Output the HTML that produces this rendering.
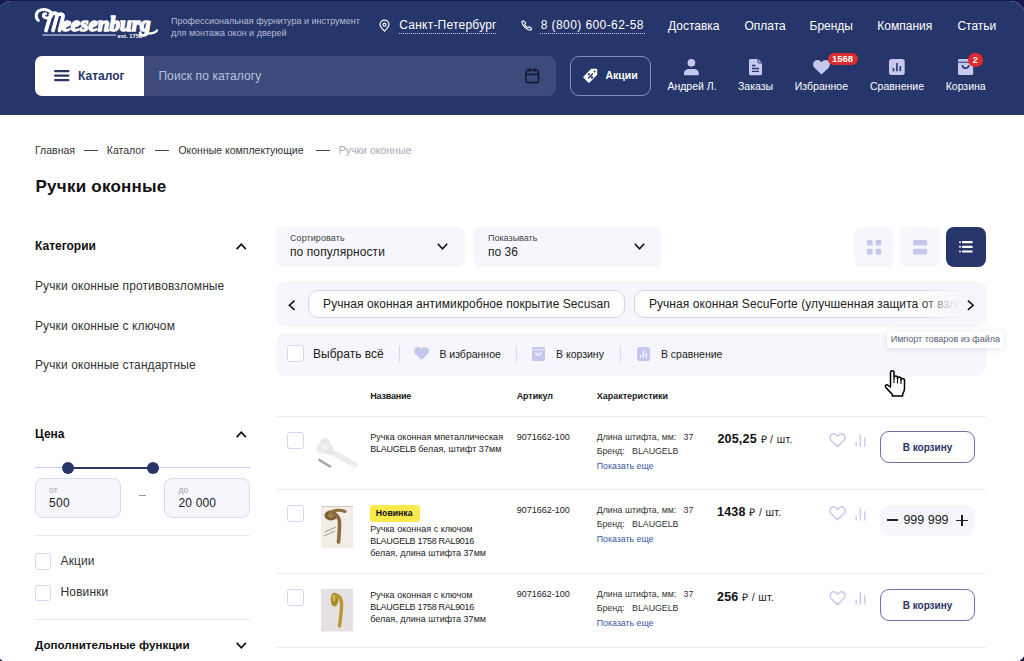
<!DOCTYPE html>
<html><head><meta charset="utf-8">
<style>
*{box-sizing:border-box;margin:0;padding:0}
html,body{width:1024px;height:661px;overflow:hidden;background:#14184a;font-family:"Liberation Sans",sans-serif}
#page{position:absolute;left:-4px;top:0.6px;width:1029.5px;height:662.6px;background:#fff;border-radius:16px 16px 14px 14px;overflow:hidden}
#inner{position:absolute;left:4px;top:-0.6px;width:1024px;height:661px}
.a{position:absolute;white-space:nowrap;line-height:1}
svg{position:absolute;overflow:visible}
#hdr{position:absolute;left:0;top:0;width:1024px;height:115px;background:#26356a}
.nav{font-size:12px;color:#fff;top:19.6px}
.lbl{font-size:10.5px;color:#fff;top:81px}
.badge{position:absolute;background:#dc2c2c;color:#fff;font-weight:bold;font-size:9.5px;text-align:center;line-height:13px}
.bc{font-size:10.5px;color:#333;top:145px}
.dash{position:absolute;top:150px;width:14px;height:1px;background:#444}
.st{font-size:12px;font-weight:bold;color:#111}
.si{font-size:12px;color:#333;letter-spacing:.1px}
.box{position:absolute;background:#f6f6fc;border-radius:8px}
.cb{position:absolute;width:17px;height:17px;border:1px solid #d6d6f0;border-radius:3px;background:#fff}
.hr{position:absolute;left:276px;width:710px;height:1px;background:#ececf7}
.t9{font-size:9px;color:#222;line-height:12px}
.ch{font-size:8.8px;color:#333;line-height:14.5px}
.lnk{color:#3b55a5}
.price{font-size:12.5px;font-weight:bold;color:#111;letter-spacing:.2px}
.price span{font-weight:normal;font-size:10.5px;letter-spacing:.35px;color:#222}
.btn{position:absolute;left:880px;width:95px;height:31.5px;border:1px solid #6a73a3;border-radius:9px;font-size:10px;font-weight:bold;color:#283567;text-align:center;line-height:31.5px}
.th{font-size:9px;font-weight:bold;color:#222;top:392px}
</style></head><body>
<div id="page"><div id="inner">
<div id="hdr">
  <!-- logo -->
  <svg style="left:0;top:0" width="170" height="42" viewBox="0 0 170 42">
    <path d="M38.3 20.5C35 17.5 35.5 11 41 9.9 46 8.9 51.2 10.5 52 14.2 51.5 18.2 47 18.8 44.5 17.2 42.5 15.8 43.3 13.5 45.6 13.8" fill="none" stroke="#fff" stroke-width="3" stroke-linecap="round"/>
    <path d="M51 14L46 30.5M50.5 14.5c3.5-2.5 7-1.5 6.5 1.5L53 30.5M56.5 15.5c3.5-2.5 7-1.5 6.5 1.5L59.5 30.5" fill="none" stroke="#fff" stroke-width="3.8" stroke-linecap="round" stroke-linejoin="round"/>
    <text x="61.5" y="31.3" font-family="Liberation Serif" font-style="italic" font-weight="bold" font-size="22" fill="#fff" stroke="#fff" stroke-width="1.6" stroke-linejoin="round" textLength="89" lengthAdjust="spacingAndGlyphs">eesenburg</text>
    <path d="M147 33.5c4.5 0 9-1 10-3" fill="none" stroke="#fff" stroke-width="2.4" stroke-linecap="round"/>
    <rect x="42.5" y="34.3" width="73.5" height="1.5" fill="#a9afcc"/>
    <text x="117.6" y="38" font-family="Liberation Sans" font-weight="bold" font-size="5.3" fill="#fff" textLength="24.5" lengthAdjust="spacingAndGlyphs">est. 1758</text>
  </svg>
  <div class="a" style="left:171px;top:15px;font-size:9px;line-height:12px;color:#b9bed8">Профессиональная фурнитура и инструмент<br>для монтажа окон и дверей</div>
  <!-- location -->
  <svg style="left:379px;top:20px" width="11" height="12" viewBox="0 0 11 12"><path d="M5.5 11.2C3.2 8.9 1 6.6 1 4.6a4.5 4.5 0 0 1 9 0c0 2-2.2 4.3-4.5 6.6z" fill="none" stroke="#fff" stroke-width="1.2" stroke-linejoin="round"/><circle cx="5.5" cy="4.7" r="1.5" fill="none" stroke="#fff" stroke-width="1.2"/></svg>
  <div class="a nav" style="left:399.3px;letter-spacing:.22px;top:18.5px">Санкт-Петербург</div>
  <div class="a" style="left:399px;top:32.5px;width:98px;height:1px;background-image:linear-gradient(90deg,#c8cce0 50%,transparent 50%);background-size:2px 1px"></div>
  <!-- phone -->
  <svg style="left:520.5px;top:20px" width="12" height="11" viewBox="0 0 12 11"><path d="M2.8.8l1.9 2.3-1 1.3c.7 1.5 1.9 2.6 3.4 3.3l1.2-1 2.3 1.8-.8 1.8C5.6 9.9 1.2 5.6.8 1.6z" fill="none" stroke="#fff" stroke-width="1.1" stroke-linejoin="round"/></svg>
  <div class="a nav" style="left:540.7px;letter-spacing:.42px;top:18.5px">8 (800) 600-62-58</div>
  <div class="a" style="left:540px;top:32.5px;width:105px;height:1px;background-image:linear-gradient(90deg,#c8cce0 50%,transparent 50%);background-size:2px 1px"></div>
  <div class="a nav" style="left:668px">Доставка</div>
  <div class="a nav" style="left:744.4px">Оплата</div>
  <div class="a nav" style="left:809.5px">Бренды</div>
  <div class="a nav" style="left:877.3px">Компания</div>
  <div class="a nav" style="left:957.4px">Статьи</div>

  <!-- catalog -->
  <div class="a" style="left:35px;top:56px;width:109px;height:40px;background:#fff;border-radius:7px 0 0 7px"></div>
  <svg style="left:54px;top:70px" width="16" height="12" viewBox="0 0 16 12"><rect x="0" y="0" width="15.5" height="2.2" rx="1.1" fill="#283567"/><rect x="0" y="4.5" width="15.5" height="2.2" rx="1.1" fill="#283567"/><rect x="0" y="9" width="15.5" height="2.2" rx="1.1" fill="#283567"/></svg>
  <div class="a" style="left:78.1px;top:70px;font-size:12px;font-weight:bold;color:#283567">Каталог</div>
  <div class="a" style="left:144px;top:56px;width:411.7px;height:40px;background:#3e4a7b;border-radius:0 8px 8px 0"></div>
  <div class="a" style="left:158.4px;top:69.6px;font-size:12px;color:#bcc1e0;letter-spacing:.1px">Поиск по каталогу</div>
  <svg style="left:525.4px;top:68px" width="14.4" height="15.5" viewBox="0 0 14.4 15.5"><rect x="0.85" y="2.2" width="12.7" height="12.45" rx="2.2" fill="none" stroke="#171a35" stroke-width="1.7"/><path d="M1 6.3h12.4M4.6 0.3v3.5M9.8 0.3v3.5" stroke="#171a35" stroke-width="1.7"/></svg>
  <!-- promo -->
  <div class="a" style="left:570px;top:55.5px;width:81px;height:40.2px;border:1px solid #858db6;border-radius:9px"></div>
  <svg style="left:582.5px;top:68.3px" width="15" height="15" viewBox="0 0 15 15"><path d="M8.2 0.8h5.2a.8.8 0 0 1 .8.8v5.2L6.6 14.4a1 1 0 0 1-1.4 0L0.6 9.8a1 1 0 0 1 0-1.4z" fill="#fff"/><circle cx="11.6" cy="3.4" r="1" fill="#283567"/><path d="M5.2 10.2L9.8 5.6" stroke="#26356a" stroke-width="1.5"/><circle cx="5.9" cy="6.3" r="1.15" fill="#26356a"/><circle cx="9" cy="9.5" r="1.15" fill="#26356a"/></svg>
  <div class="a" style="left:605.5px;top:69.7px;font-size:10.5px;font-weight:bold;color:#fff">Акции</div>

  <!-- user icons -->
  <svg style="left:684.3px;top:58.8px" width="15" height="16.5" viewBox="0 0 15 16.5"><circle cx="7.4" cy="3.85" r="3.85" fill="#c6c7ec"/><path d="M0 14.5C0 11.5 2.5 10 5 10h4.8c2.7 0 5 1.5 5 4.5v1.8H0z" fill="#c6c7ec"/></svg>
  <div class="a lbl" style="left:667.4px">Андрей Л.</div>
  <svg style="left:749px;top:58.7px" width="13" height="16.3" viewBox="0 0 13 16.3"><path d="M1.5 0h7.5l4 4v10.8a1.5 1.5 0 0 1-1.5 1.5h-10A1.5 1.5 0 0 1 0 14.8V1.5A1.5 1.5 0 0 1 1.5 0z" fill="#c6c7ec"/><path d="M9 0v3a1 1 0 0 0 1 1h3" fill="none" stroke="#283567" stroke-width="1"/><path d="M3 6.5h3.5M3 9.5h7M3 12.3h7" stroke="#283567" stroke-width="1.3"/></svg>
  <div class="a lbl" style="left:738px">Заказы</div>
  <svg style="left:813px;top:59.7px" width="17" height="14.5" viewBox="0 0 17 14.5"><path d="M8.5 14.5L1.6 7.9C-.6 5.7-.4 2.2 2 .7 4.1-.6 6.8 0 8.5 2.2 10.2 0 12.9-.6 15 .7c2.4 1.5 2.6 5 .4 7.2z" fill="#c6c7ec"/></svg>
  <div class="badge" style="left:827.6px;top:52.9px;width:30px;height:12.5px;border-radius:6.5px;line-height:12.5px">1568</div>
  <div class="a lbl" style="left:794.8px">Избранное</div>
  <svg style="left:889px;top:59px" width="16" height="16" viewBox="0 0 16 16"><rect x="0" y="0" width="15.7" height="16" rx="2.5" fill="#c6c7ec"/><path d="M4.5 12.3V9M7.9 12.3V4M11.3 12.3V7" stroke="#283567" stroke-width="1.6"/></svg>
  <div class="a lbl" style="left:870px">Сравнение</div>
  <svg style="left:957.8px;top:59px" width="15.2" height="16" viewBox="0 0 15.2 16"><path d="M1.5 0h12.2a1.5 1.5 0 0 1 1.5 1.5v13a1.5 1.5 0 0 1-1.5 1.5H1.5A1.5 1.5 0 0 1 0 14.5v-13A1.5 1.5 0 0 1 1.5 0z" fill="#c6c7ec"/><path d="M0 3.2h15.2" stroke="#283567" stroke-width="1"/><path d="M4.4 6c0 4.2 6.4 4.2 6.4 0" fill="none" stroke="#26356a" stroke-width="1.6"/></svg>
  <div class="badge" style="left:968px;top:52.7px;width:14.7px;height:14.7px;border-radius:50%;line-height:14.7px;font-size:9px">2</div>
  <div class="a lbl" style="left:945.7px">Корзина</div>
</div>

<!-- breadcrumb -->
<div class="a bc" style="left:35px">Главная</div>
<div class="dash" style="left:83.7px"></div>
<div class="a bc" style="left:106.8px">Каталог</div>
<div class="dash" style="left:155px"></div>
<div class="a bc" style="left:178.4px">Оконные комплектующие</div>
<div class="dash" style="left:316px"></div>
<div class="a bc" style="left:338.8px;color:#a9a9b3">Ручки оконные</div>
<div class="a" style="left:35.5px;top:178.2px;font-size:17px;font-weight:bold;color:#111;letter-spacing:.24px">Ручки оконные</div>

<!-- sidebar -->
<div class="a st" style="left:35px;top:240px">Категории</div>
<svg style="left:235.8px;top:243px" width="10.6" height="7" viewBox="0 0 10.6 7"><path d="M0.7 6.2L5.3 1.2 9.9 6.2" fill="none" stroke="#111" stroke-width="1.7"/></svg>
<div class="a si" style="left:35px;top:280px">Ручки оконные противовзломные</div>
<div class="a si" style="left:35px;top:319.5px">Ручки оконные с ключом</div>
<div class="a si" style="left:35px;top:359px">Ручки оконные стандартные</div>

<div class="a st" style="left:35px;top:428.1px">Цена</div>
<svg style="left:235.8px;top:431.3px" width="10.6" height="7" viewBox="0 0 10.6 7"><path d="M0.7 6.2L5.3 1.2 9.9 6.2" fill="none" stroke="#111" stroke-width="1.7"/></svg>
<div class="a" style="left:35px;top:466.8px;width:215px;height:1.5px;background:#c9caee"></div>
<div class="a" style="left:68px;top:466.5px;width:86px;height:2px;background:#283567"></div>
<div class="a" style="left:62.4px;top:461.5px;width:12px;height:12px;border-radius:50%;background:#283567"></div>
<div class="a" style="left:147.4px;top:461.5px;width:12px;height:12px;border-radius:50%;background:#283567"></div>
<div class="box" style="left:35px;top:477.5px;width:85.8px;height:40px;border:1px solid #d9d9f4"></div>
<div class="box" style="left:164px;top:477.5px;width:85.8px;height:40px;border:1px solid #d9d9f4"></div>
<div class="a" style="left:49.1px;top:485.8px;font-size:8.5px;color:#a3a3b3">от</div>
<div class="a" style="left:49.1px;top:497px;font-size:12px;color:#222;letter-spacing:.3px">500</div>
<div class="a" style="left:139px;top:495.3px;width:7px;height:1px;background:#999"></div>
<div class="a" style="left:178.5px;top:485.8px;font-size:8.5px;color:#a3a3b3">до</div>
<div class="a" style="left:178.5px;top:497px;font-size:12px;color:#222;letter-spacing:.15px">20 000</div>
<div class="a" style="left:35px;top:535px;width:215px;height:1px;background:#e9e9f6"></div>
<div class="cb" style="left:34.8px;top:553px;width:16.7px;height:16.5px"></div>
<div class="a si" style="left:60.6px;top:555.1px">Акции</div>
<div class="cb" style="left:34.8px;top:584.8px;width:16.7px;height:16.5px"></div>
<div class="a si" style="left:60.6px;top:586.3px">Новинки</div>
<div class="a" style="left:35px;top:619px;width:215px;height:1px;background:#e9e9f6"></div>
<div class="a st" style="left:35px;top:638.9px;font-size:11.6px">Дополнительные функции</div>
<svg style="left:235.8px;top:641.5px" width="10.6" height="7" viewBox="0 0 10.6 7"><path d="M0.7 0.8L5.3 5.8 9.9 0.8" fill="none" stroke="#111" stroke-width="1.7"/></svg>

<!-- selects -->
<div class="box" style="left:275.5px;top:226.5px;width:189.2px;height:40.4px"></div>
<div class="a" style="left:290px;top:233.5px;font-size:9px;color:#444;letter-spacing:.08px">Сортировать</div>
<div class="a" style="left:290px;top:246px;font-size:12px;color:#222;letter-spacing:.09px">по популярности</div>
<svg style="left:436.5px;top:243.3px" width="11" height="7" viewBox="0 0 11 7"><path d="M0.8 0.8L5.5 5.8 10.2 0.8" fill="none" stroke="#111" stroke-width="1.6"/></svg>
<div class="box" style="left:473.2px;top:226.5px;width:189.1px;height:40.4px"></div>
<div class="a" style="left:488px;top:233.5px;font-size:9px;color:#444">Показывать</div>
<div class="a" style="left:488px;top:246px;font-size:12px;color:#222">по 36</div>
<svg style="left:634px;top:243.3px" width="11" height="7" viewBox="0 0 11 7"><path d="M0.8 0.8L5.5 5.8 10.2 0.8" fill="none" stroke="#111" stroke-width="1.6"/></svg>

<!-- view buttons -->
<div class="box" style="left:854px;top:226.6px;width:40px;height:40px"></div>
<svg style="left:867px;top:239.6px" width="14.2" height="14.4" viewBox="0 0 14.2 14.4"><rect x="0" y="0" width="5.6" height="5.6" rx="1.2" fill="#c6c7e9"/><rect x="8.6" y="0" width="5.6" height="5.6" rx="1.2" fill="#c6c7e9"/><rect x="0" y="8.8" width="5.6" height="5.6" rx="1.2" fill="#c6c7e9"/><rect x="8.6" y="8.8" width="5.6" height="5.6" rx="1.2" fill="#c6c7e9"/></svg>
<div class="box" style="left:899.8px;top:226.6px;width:40px;height:40px"></div>
<svg style="left:912.7px;top:239.6px" width="14.2" height="14.4" viewBox="0 0 14.2 14.4"><rect x="0" y="0" width="14.2" height="5.6" rx="1.2" fill="#c6c7e9"/><rect x="0" y="8.8" width="14.2" height="5.6" rx="1.2" fill="#c6c7e9"/></svg>
<div class="box" style="left:945.7px;top:226.6px;width:40px;height:40px;background:#26356a"></div>
<svg style="left:958.7px;top:240.7px" width="13.6" height="11.7" viewBox="0 0 13.6 11.7"><circle cx="1" cy="1.2" r="1" fill="#fff"/><circle cx="1" cy="5.85" r="1" fill="#fff"/><circle cx="1" cy="10.5" r="1" fill="#fff"/><rect x="3" y="0.1" width="10.6" height="2.2" rx=".5" fill="#fff"/><rect x="3" y="4.75" width="10.6" height="2.2" rx=".5" fill="#fff"/><rect x="3" y="9.4" width="10.6" height="2.2" rx=".5" fill="#fff"/></svg>

<!-- tag bar -->
<div class="box" style="left:275.5px;top:281.2px;width:711px;height:45.7px;border-radius:11px"></div>
<svg style="left:288px;top:299.5px" width="7.5" height="10.5" viewBox="0 0 7.5 10.5"><path d="M6.6 0.7L1.4 5.25l5.2 4.55" fill="none" stroke="#111" stroke-width="1.6"/></svg>
<div class="a" style="left:308px;top:290.2px;width:316.5px;height:28.2px;border:1px solid #d3d3f3;border-radius:10px;background:#fff"></div>
<div class="a" style="left:323.1px;top:298px;font-size:12px;color:#222;letter-spacing:.07px">Ручная оконная антимикробное покрытие Secusan</div>
<div class="a" style="left:634.2px;top:290.2px;width:330px;height:28.2px;border:1px solid #d3d3f3;border-radius:10px;background:#fff"></div>
<div class="a" style="left:648.9px;top:298px;font-size:12px;color:#222;letter-spacing:.07px">Ручная оконная SecuForte (улучшенная защита от взлома)</div>
<div class="a" style="left:920px;top:285px;width:66px;height:38px;background:linear-gradient(90deg,rgba(246,246,252,0) 0%,rgba(246,246,252,.85) 45%,#f6f6fc 62%)"></div>
<svg style="left:966.8px;top:299.5px" width="7.5" height="10.5" viewBox="0 0 7.5 10.5"><path d="M0.9 0.7L6.1 5.25 0.9 9.8" fill="none" stroke="#111" stroke-width="1.6"/></svg>

<!-- action bar -->
<div class="box" style="left:276px;top:333px;width:710.4px;height:42.5px;border-radius:11px"></div>
<div class="cb" style="left:287px;top:345.2px"></div>
<div class="a" style="left:313.1px;top:348.3px;font-size:12px;color:#222">Выбрать всё</div>
<div class="a" style="left:399px;top:346px;width:1px;height:16.2px;background:#d8d8ef"></div>
<svg style="left:414.3px;top:347.2px" width="15" height="13" viewBox="0 0 17 14.5" preserveAspectRatio="none"><path d="M8.5 14.5L1.6 7.9C-.6 5.7-.4 2.2 2 .7 4.1-.6 6.8 0 8.5 2.2 10.2 0 12.9-.6 15 .7c2.4 1.5 2.6 5 .4 7.2z" fill="#c6c7ec"/></svg>
<div class="a" style="left:439.4px;top:348.6px;font-size:10.5px;color:#222">В избранное</div>
<div class="a" style="left:515.5px;top:346px;width:1px;height:16.2px;background:#d8d8ef"></div>
<svg style="left:532px;top:346.7px" width="13" height="14" viewBox="0 0 15.2 16" preserveAspectRatio="none"><path d="M1.5 0h12.2a1.5 1.5 0 0 1 1.5 1.5v13a1.5 1.5 0 0 1-1.5 1.5H1.5A1.5 1.5 0 0 1 0 14.5v-13A1.5 1.5 0 0 1 1.5 0z" fill="#c6c7ec"/><path d="M0 3.2h15.2" stroke="#f6f6fc" stroke-width="1"/><path d="M4.4 6c0 4.2 6.4 4.2 6.4 0" fill="none" stroke="#f6f6fc" stroke-width="1.6"/></svg>
<div class="a" style="left:556px;top:348.6px;font-size:10.5px;color:#222">В корзину</div>
<div class="a" style="left:620.2px;top:346px;width:1px;height:16.2px;background:#d8d8ef"></div>
<svg style="left:636.6px;top:346.7px" width="13.1" height="14" viewBox="0 0 16 16" preserveAspectRatio="none"><rect x="0" y="0" width="16" height="16" rx="2.5" fill="#c6c7ec"/><path d="M4.5 12.3V9M7.9 12.3V4M11.3 12.3V7" stroke="#f6f6fc" stroke-width="1.6"/></svg>
<div class="a" style="left:660.9px;top:348.6px;font-size:10.5px;color:#222">В сравнение</div>

<!-- tooltip -->
<div class="a" style="left:887.2px;top:331px;width:116.4px;height:17.2px;background:#fff;border-radius:3px;box-shadow:0 1px 6px rgba(40,40,80,.12)"></div>
<div class="a" style="left:890.7px;top:335px;font-size:9px;color:#575d76">Импорт товаров из файла</div>

<!-- table -->
<div class="a th" style="left:370.2px;letter-spacing:-.2px">Название</div>
<div class="a th" style="left:516.7px;letter-spacing:-.1px">Артикул</div>
<div class="a th" style="left:596.7px">Характеристики</div>
<div class="hr" style="top:415.6px"></div>

<!-- row 1 -->
<div class="cb" style="left:287.2px;top:431.8px"></div>
<svg style="left:315px;top:437px" width="43" height="31" viewBox="0 0 43 31"><path d="M12 13C20 17 30 22 40 28" stroke="#ececec" stroke-width="5.5" stroke-linecap="round"/><circle cx="10" cy="6" r="5" fill="#e9e9e9"/><circle cx="6.5" cy="11.5" r="5" fill="#ebebeb"/><circle cx="13" cy="12" r="5.5" fill="#e8e8e8"/><circle cx="10.5" cy="10" r="3" fill="#f2f2f2"/><path d="M3.5 22.5L16 30" stroke="#97a1ad" stroke-width="2.2"/><path d="M4 21.5L15.5 28.7" stroke="#c5ccd4" stroke-width=".8"/></svg>
<div class="a t9" style="left:370.2px;top:431.2px;letter-spacing:.04px">Ручка оконная мпеталлическая<br><span style="letter-spacing:-.25px">BLAUGELB</span> белая, штифт 37мм</div>
<div class="a t9" style="left:516.7px;top:430.9px">9071662-100</div>
<div class="a ch" style="left:596.7px;top:429.8px">Длина штифта, мм:&nbsp;&nbsp; 37<br>Бренд:&nbsp;&nbsp; BLAUGELB<br><span class="lnk">Показать еще</span></div>
<div class="a price" style="left:717.4px;top:433.3px">205,25 <span>₽ / шт.</span></div>
<svg style="left:829px;top:432.7px" width="17" height="14.5" viewBox="0 0 17 14.5"><path d="M8.5 13.6L2.1 7.5C.3 5.7.5 2.8 2.5 1.5 4.2.4 6.6.9 8.5 3.2 10.4.9 12.8.4 14.5 1.5c2 1.3 2.2 4.2.4 6z" fill="none" stroke="#c9c9ef" stroke-width="1.5" stroke-linejoin="round"/></svg>
<svg style="left:854.8px;top:434px" width="11" height="13" viewBox="0 0 11 13"><path d="M1.2 12.5V7.8M5.3 12.5V0.5M9.8 12.5V3.3" stroke="#c9c9ef" stroke-width="1.4"/></svg>
<div class="btn" style="top:431.4px">В корзину</div>
<div class="hr" style="top:489px"></div>

<!-- row 2 -->
<div class="cb" style="left:287.2px;top:505px"></div>
<svg style="left:321px;top:506px" width="32" height="42" viewBox="0 0 32 42"><rect width="32" height="42" fill="#f2ede6"/><rect width="32" height="1" fill="#d9cbb8"/><path d="M4 26l11-5M3 30l11-5" stroke="#a9ad9c" stroke-width="1.3"/><ellipse cx="10" cy="9.5" rx="6.5" ry="5" fill="#7c5d33"/><path d="M9 6.5C14 4 20 4 24 5.5" stroke="#8f6e3e" stroke-width="3" fill="none" stroke-linecap="round"/><path d="M15 9c3 2 4 6 3.5 12-.3 5-.5 10-1 15" stroke="#8b6a3b" stroke-width="3.6" fill="none" stroke-linecap="round"/><ellipse cx="10" cy="9.5" rx="3" ry="2.2" fill="#a08050"/></svg>
<div class="a" style="left:370.2px;top:504.6px;width:49.6px;height:17.1px;background:#fce94d;border-radius:3px"></div>
<div class="a" style="left:375.8px;top:509px;font-size:8.7px;font-weight:bold;color:#111">Новинка</div>
<div class="a t9" style="left:370.2px;top:522.9px;font-size:9px;letter-spacing:.02px">Ручка оконная с ключом<br><span style="letter-spacing:-.3px">BLAUGELB 1758 RAL9016</span><br>белая, длина штифта 37мм</div>
<div class="a t9" style="left:516.7px;top:504.4px">9071662-100</div>
<div class="a ch" style="left:596.7px;top:502.9px">Длина штифта, мм:&nbsp;&nbsp; 37<br>Бренд:&nbsp;&nbsp; BLAUGELB<br><span class="lnk">Показать еще</span></div>
<div class="a price" style="left:717px;top:506.3px">1438 <span>₽ / шт.</span></div>
<svg style="left:829.4px;top:506.4px" width="17" height="14.5" viewBox="0 0 17 14.5"><path d="M8.5 13.6L2.1 7.5C.3 5.7.5 2.8 2.5 1.5 4.2.4 6.6.9 8.5 3.2 10.4.9 12.8.4 14.5 1.5c2 1.3 2.2 4.2.4 6z" fill="none" stroke="#c9c9ef" stroke-width="1.5" stroke-linejoin="round"/></svg>
<svg style="left:854.8px;top:507.5px" width="11" height="13" viewBox="0 0 11 13"><path d="M1.2 12.5V7.8M5.3 12.5V0.5M9.8 12.5V3.3" stroke="#c9c9ef" stroke-width="1.4"/></svg>
<div class="box" style="left:880.4px;top:504.7px;width:94.3px;height:31.3px;border-radius:9px"></div>
<div class="a" style="left:887px;top:519.3px;width:11.3px;height:1.7px;background:#222"></div>
<div class="a" style="left:903.4px;top:513.8px;font-size:12.5px;color:#222">999 999</div>
<div class="a" style="left:956.3px;top:519.6px;width:11.4px;height:1.7px;background:#222"></div>
<div class="a" style="left:961.15px;top:514.8px;width:1.7px;height:11.4px;background:#222"></div>
<div class="hr" style="top:573px"></div>

<!-- row 3 -->
<div class="cb" style="left:287.2px;top:589px"></div>
<svg style="left:321px;top:589px" width="32" height="42.5" viewBox="0 0 32 42.5"><rect width="32" height="42.5" fill="#e5e1e2"/><ellipse cx="13.5" cy="10.5" rx="3.8" ry="7" fill="#a9882c"/><path d="M15 6c4 1 6 5 5.5 12-.3 6-1 12-2 19" stroke="#b9972f" stroke-width="3.4" fill="none" stroke-linecap="round"/><ellipse cx="13" cy="9" rx="1.5" ry="3.5" fill="#d2b555"/></svg>
<div class="a t9" style="left:370.2px;top:588.5px;font-size:9px;letter-spacing:.02px">Ручка оконная с ключом<br><span style="letter-spacing:-.3px">BLAUGELB 1758 RAL9016</span><br>белая, длина штифта 37мм</div>
<div class="a t9" style="left:516.7px;top:588.4px">9071662-100</div>
<div class="a ch" style="left:596.7px;top:586.9px">Длина штифта, мм:&nbsp;&nbsp; 37<br>Бренд:&nbsp;&nbsp; BLAUGELB<br><span class="lnk">Показать еще</span></div>
<div class="a price" style="left:717px;top:590.7px">256 <span>₽ / шт.</span></div>
<svg style="left:829.4px;top:590.5px" width="17" height="14.5" viewBox="0 0 17 14.5"><path d="M8.5 13.6L2.1 7.5C.3 5.7.5 2.8 2.5 1.5 4.2.4 6.6.9 8.5 3.2 10.4.9 12.8.4 14.5 1.5c2 1.3 2.2 4.2.4 6z" fill="none" stroke="#c9c9ef" stroke-width="1.5" stroke-linejoin="round"/></svg>
<svg style="left:854.8px;top:591.5px" width="11" height="13" viewBox="0 0 11 13"><path d="M1.2 12.5V7.8M5.3 12.5V0.5M9.8 12.5V3.3" stroke="#c9c9ef" stroke-width="1.4"/></svg>
<div class="btn" style="top:589px">В корзину</div>
<div class="hr" style="top:646.5px"></div>

<!-- cursor -->
<svg style="left:883.5px;top:370px" width="22" height="27" viewBox="0 0 22 27"><path d="M6.5 13.5V2.6a1.75 1.75 0 0 1 3.5 0V7.8a1.75 1.75 0 0 1 3.5 0V8.8a1.75 1.75 0 0 1 3.5 0V10.3a1.75 1.75 0 0 1 3.5 0V18.5c0 2.5-.8 4-1.8 5.5V26H8.2V24C6 22.3 3.5 19.5 1.6 17c-.9-1.3.5-2.8 1.9-2L6.5 17z" fill="#fff" stroke="#000" stroke-width="1.5" stroke-linejoin="round"/><path d="M10 8v5M13.5 9v4.5M17 10.5v3.5" stroke="#000" stroke-width="1.1"/></svg>
</div></div>
</body></html>
